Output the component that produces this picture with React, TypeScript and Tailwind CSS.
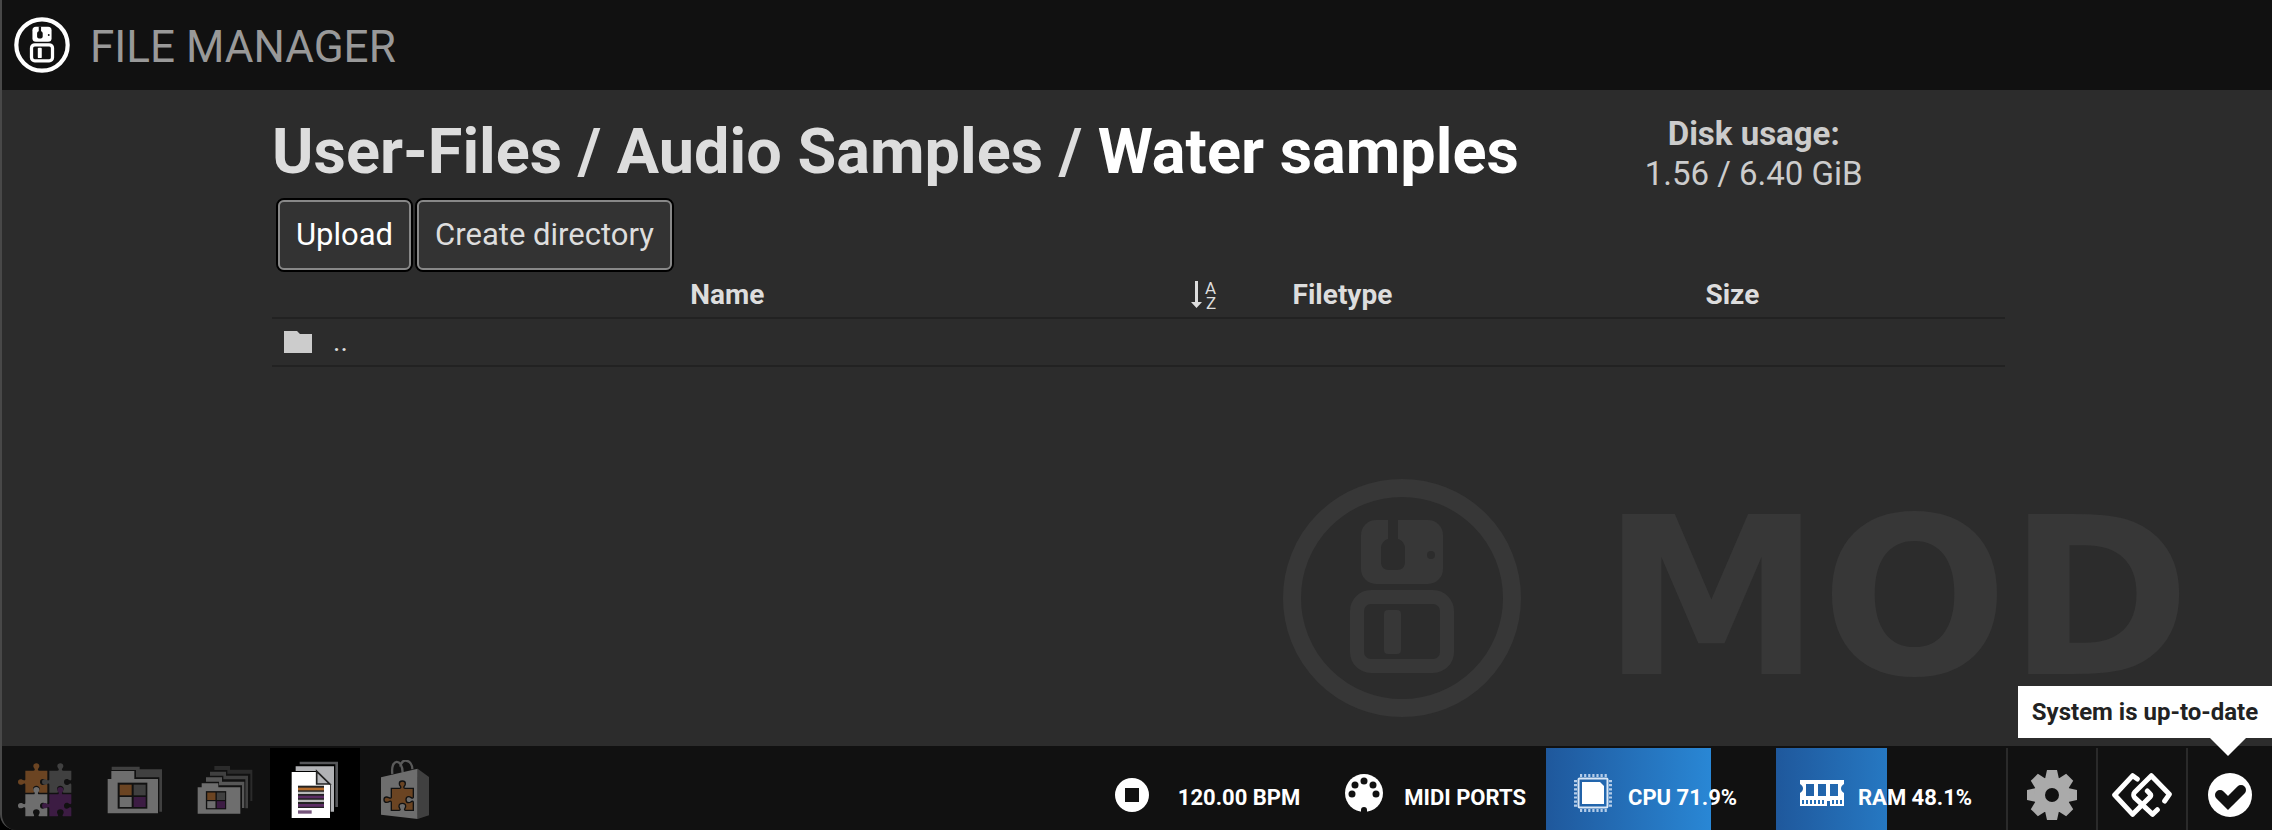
import React from 'react';

const ModFigure: React.FC<{ className?: string; cutout: string }> = ({ className, cutout }) => (
  <svg className={className} viewBox="0 0 240 240" fill="currentColor" aria-hidden="true">
    <circle cx="120" cy="120" r="110" fill="none" stroke="currentColor" strokeWidth="18" />
    <rect x="79" y="42" width="82" height="64" rx="15" />
    <path d="M106 41h10v20c4 1 7 5 7 9v14c0 5-3 8-8 8h-8c-5 0-8-3-8-8V70c0-4 3-8 7-9z" fill={cutout} />
    <circle cx="149" cy="77" r="4" fill={cutout} />
    <rect x="75" y="119" width="90" height="69" rx="14" fill="none" stroke="currentColor" strokeWidth="14" />
    <rect x="102" y="132" width="17" height="44" rx="4" />
  </svg>
);

const FolderIcon = () => (
  <svg className="w-[30px] h-6" viewBox="0 0 30 24" fill="#cccccc" aria-hidden="true">
    <path d="M1 1h13l3 3h12v19H1z" />
  </svg>
);

const SortIcon = () => (
  <svg className="w-8 h-9" viewBox="0 0 32 36" fill="#dddddd" aria-hidden="true">
    <path d="M4 4h3v21h4l-5.500 6L0 25h4z" />
    <text x="14" y="17" fontSize="17" fontWeight="400" fontFamily="Roboto, sans-serif">A</text>
    <text x="15" y="32" fontSize="17" fontWeight="400" fontFamily="Roboto, sans-serif">Z</text>
  </svg>
);

const PIECE =
  'M0 0h24c4 0 5-2 4-5-2-3-4-5-4-9 0-5 4-8 9-8s9 3 9 8c0 4-2 6-4 9-1 3 0 5 4 5h24v26c0 3-2 4-5 3-3-2-5-4-9-4-5 0-8 4-8 9s3 9 8 9c4 0 6-2 9-4 3-1 5 0 5 4v23H43c-3 0-4-2-3-4 2-3 3-5 3-8 0-5-4-9-10-9s-10 4-10 9c0 3 2 5 3 8 1 2 0 4-3 4H0V43c0-4-2-5-5-4-3 2-5 3-9 3-5 0-8-3-8-8s3-8 8-8c4 0 6 2 9 3 3 1 5 0 5-3z';

const PuzzleIcon = () => (
  <svg className="w-14 h-[58px]" viewBox="40 82 168 174" aria-hidden="true">
    <path transform="translate(65 111)" d={PIECE} fill="#6b4422" />
    <path transform="translate(137 111)" d={PIECE} fill="#404040" />
    <path transform="translate(65 182)" d={PIECE} fill="#6e6e6e" />
    <path transform="translate(137 182)" d={PIECE} fill="#3c1c43" />
  </svg>
);

const BoardGrid = () => (
  <>
    <rect x="360" y="152" width="89" height="78" fill="#111111" />
    <rect x="366" y="158" width="36" height="32" fill="#6b4422" />
    <rect x="408" y="158" width="36" height="32" fill="#404040" />
    <rect x="366" y="195" width="36" height="30" fill="#6e6e6e" />
    <rect x="408" y="195" width="36" height="30" fill="#3c1c43" />
  </>
);

const BoardsIcon = () => (
  <svg className="w-14 h-12" viewBox="328 102 168 144" aria-hidden="true">
    <path d="M342 104h84v8h67v127h-8V136h-70v-22h-73z" fill="#404040" />
    <path d="M330 141h11v-24h69v24h71v103H330z" fill="#6e6e6e" />
    <BoardGrid />
  </svg>
);

const BanksIcon = () => (
  <svg className="w-14 h-[50px]" viewBox="591 91 168 150" aria-hidden="true">
    <path d="M643 94h47v11h67v94h-6v-82h-69v-11h-39z" fill="#2b2b2b" />
    <path d="M630 111h48v12h66v98h-8v-87h-66v-11h-40z" fill="#404040" />
    <path d="M618 128h48v13h67v79h-7v-68h-69v-11h-39z" fill="#575757" />
    <path d="M593 158h12v-12h50v12h66v79H593z" fill="#6e6e6e" />
    <g transform="translate(371 63) scale(.685 .7)">
      <BoardGrid />
    </g>
  </svg>
);

const FilesIcon = () => (
  <svg className="w-12 h-[58px]" viewBox="879 78 144 174" aria-hidden="true">
    <path d="M905 80h115v136h-8V88H905z" fill="#56575a" />
    <path d="M893 94h115v136h-10V150l-42-42H893z" fill="#b1b2b5" />
    <path d="M881 111h75l40 39v99H881z" fill="#ffffff" />
    <path d="M956 109v38h39z" fill="#b5b6b9" stroke="#222222" strokeWidth="5" />
    <path d="M900 152h78v67h-78z" fill="#222222" />
    <path d="M900 158h78v8h-78z" fill="#b56c2c" />
    <path d="M900 170h78v7h-78zM900 194h78v7h-78z" fill="#b8b8b8" />
    <path d="M900 182h78v8h-78zM900 207h78v8h-78z" fill="#5c2d64" />
    <path d="M900 226h41v10h-41z" fill="#76567c" />
  </svg>
);

const StoreIcon = () => (
  <svg className="w-[50px] h-[60px]" viewBox="1137 78 150 180" aria-hidden="true">
    <path d="M1174 120c-6-48 30-48 31-4M1198 98c3-28 36-22 36 8" fill="none" stroke="#5a5a5a" strokeWidth="7" />
    <path d="M1140 130l110-26v151l-110-13z" fill="#6e6e6e" />
    <path d="M1250 104l34 25v115l-34 11z" fill="#404040" />
    <path transform="translate(1171 163)" d={PIECE} fill="#6b4422" stroke="#111111" strokeWidth="4" />
  </svg>
);

const StopIcon = () => (
  <svg className="w-9 h-9" viewBox="0 0 36 36" aria-hidden="true">
    <path fillRule="evenodd" d="M18 1a17 17 0 1 1 0 34 17 17 0 0 1 0-34zm-7 10v14h14V11z" fill="#ffffff" />
  </svg>
);

const MidiIcon = () => (
  <svg className="w-10 h-10" viewBox="0 0 40 40" fill="#111111" aria-hidden="true">
    <circle cx="20" cy="20" r="19" fill="#ffffff" />
    <circle cx="20" cy="8" r="3.500" />
    <circle cx="11" cy="12" r="3.500" />
    <circle cx="29" cy="12" r="3.500" />
    <circle cx="8" cy="21" r="3.500" />
    <circle cx="32" cy="21" r="3.500" />
    <path d="M17 40v-3a3 3 0 0 1 6 0v3z" />
  </svg>
);

const CpuIcon = () => (
  <svg className="w-10 h-10" viewBox="0 0 40 40" fill="none" aria-hidden="true">
    <path d="M7 2.500h27M7 37.500h27M2.500 7v27M37.500 7v27" stroke="#b5cde9" strokeWidth="3" strokeDasharray="2.200 1.900" />
    <rect x="5.500" y="5.500" width="29" height="29" rx="1" stroke="#dbe8f6" strokeWidth="2" />
    <path d="M9 9h18l4 4v18H9z" fill="#ffffff" />
  </svg>
);

const RamIcon = () => (
  <svg className="w-[46px] h-7" viewBox="0 0 46 28" aria-hidden="true">
    <path
      fillRule="evenodd"
      d="M1 1h44v4c-4 2-4 7 0 9v13H31v-5h-3v5H1V14c4-2 4-7 0-9zm6 4v12h8V5zm12 0v12h8V5zm12 0v12h8V5z"
      fill="#ffffff"
    />
    <path d="M3 23h24M33 23h11" stroke="#256fb7" strokeWidth="4" strokeDasharray="2 2" />
  </svg>
);

const GearIcon = () => (
  <svg className="w-[50px] h-[50px]" viewBox="-25 -25 50 50" fill="#aaaaaa" aria-hidden="true">
    {[0, 45, 90, 135].map(angle => (
      <path key={angle} transform={`rotate(${angle})`} d="M-5-25h10l2 9v32l-2 9h-10l-2-9v-32z" />
    ))}
    <circle r="18" />
    <circle r="7" fill="#111111" />
  </svg>
);

const LinkIcon = () => (
  <svg className="w-[60px] h-11" viewBox="0 0 180 132" fill="none" stroke="#ffffff" strokeWidth="15" strokeLinecap="round" strokeLinejoin="round" aria-hidden="true">
    <path d="M76 18L62 8 8 66l54 58 52-52c3-4 3-7 0-10l-8-8" />
    <path d="M136 110l-14 14L68 74c-4-4-4-12 0-16l50-50 54 56-14 20" />
  </svg>
);

const CheckIcon = () => (
  <svg className="w-[46px] h-[46px]" viewBox="0 0 46 46" fill="none" aria-hidden="true">
    <circle cx="23" cy="23" r="22" fill="#ffffff" />
    <path d="M13 23l8 8 13-13" stroke="#111111" strokeWidth="10" strokeLinecap="round" />
  </svg>
);

const tabs = [
  { label: 'Pedalboard', icon: <PuzzleIcon /> },
  { label: 'Pedalboards library', icon: <BoardsIcon /> },
  { label: 'Banks', icon: <BanksIcon /> },
  { label: 'File manager', icon: <FilesIcon />, active: true },
  { label: 'Plugin store', icon: <StoreIcon /> },
];

const meters = [
  { label: 'CPU', value: 71.9, icon: <CpuIcon />, spacing: 'pl-[27px] gap-[15px]', fill: 'to-[#2987d5]' },
  { label: 'RAM', value: 48.1, icon: <RamIcon />, spacing: 'pl-[23px] gap-[13px]', fill: 'to-[#2678c2]' },
];

const Header = () => (
  <header className="flex h-[90px] items-center gap-5 bg-[#111111] pl-3">
    <ModFigure className="h-14 w-14 text-white" cutout="#111111" />
    <h1 className="pt-1 text-[44px] leading-none text-[#999999]">FILE MANAGER</h1>
  </header>
);

const FileTable = () => (
  <table className="w-full table-fixed border-collapse text-[28px] leading-9">
    <thead>
      <tr className="h-[46px] border-b-2 border-[#222222]">
        <th className="w-[53%] pr-2">Name</th>
        <th className="w-[2%]">
          <button className="block" aria-label="Sort by name">
            <SortIcon />
          </button>
        </th>
        <th className="w-[14%] pr-2">Filetype</th>
        <th className="w-[31%] pr-2">Size</th>
      </tr>
    </thead>
    <tbody>
      <tr className="h-12 border-b-2 border-[#222222]">
        <td>
          <a href="#" className="flex items-center gap-5 pl-[11px]">
            <FolderIcon />
            ..
          </a>
        </td>
        <td />
        <td />
        <td />
      </tr>
    </tbody>
  </table>
);

const Footer = () => (
  <footer className="relative flex h-[84px] bg-[#111111] pt-0.5 text-[22px] font-bold text-white">
    <nav className="-ml-0.5 flex">
      {tabs.map(tab => (
        <button
          key={tab.label}
          aria-label={tab.label}
          className={`flex w-[90px] items-center justify-center pt-0.5 ${tab.active ? 'bg-black' : ''}`}
        >
          {tab.icon}
        </button>
      ))}
    </nav>

    <div className="ml-auto flex">
      <button className="flex items-center gap-7 pt-3">
        <StopIcon />
        <span className="pt-1">120.00 BPM</span>
      </button>
      <button className="mr-5 ml-11 flex items-center gap-5 pt-2">
        <MidiIcon />
        <span className="pt-2">MIDI PORTS</span>
      </button>
      {meters.map(meter => (
        <div key={meter.label} className="relative w-[230px]">
          <div
            className={`h-full bg-linear-to-r from-[#1f589c] ${meter.fill}`}
            style={{ width: `${meter.value}%` }}
          />
          <div className={`absolute inset-0 flex items-center pt-2 ${meter.spacing}`}>
            {meter.icon}
            <span className="pt-2">{meter.label} {meter.value}%</span>
          </div>
        </div>
      ))}
      <button aria-label="Settings" className="flex w-[90px] items-center justify-center border-l-2 border-[#2a2a2a] pt-3">
        <GearIcon />
      </button>
      <button aria-label="Connections" className="flex w-[90px] items-center justify-center border-l-2 border-[#2a2a2a] pt-3">
        <LinkIcon />
      </button>
      <button aria-label="System status" className="flex w-[86px] items-center justify-center border-l-2 border-[#2a2a2a] pt-3">
        <CheckIcon />
      </button>
    </div>

    <div role="tooltip" className="absolute right-0 bottom-[92px] flex h-[52px] w-[254px] items-center justify-center bg-white text-[24px] text-[#222222]">
      System is up-to-date
      <span className="absolute top-full right-[26px] border-x-[18px] border-t-[18px] border-x-transparent border-t-white" />
    </div>
  </footer>
);

const App: React.FC = () => {
  return (
    <div className="bg-black font-[Roboto,sans-serif]">
      <div className="flex min-h-screen flex-col overflow-hidden rounded-bl-2xl border-l-2 border-[#484848] bg-[#2c2c2c] text-[#dddddd]">
        <Header />
        <main className="relative flex-1">
          <div className="absolute right-[18px] bottom-[28px] flex w-[972px] items-center gap-20 text-[#373737]" aria-hidden="true">
            <ModFigure className="h-60 w-60 shrink-0" cutout="#2c2c2c" />
            <span className="font-['DejaVu_Sans',sans-serif] text-[220px] leading-[240px] font-bold">MOD</span>
          </div>
          <div className="relative mr-[267px] ml-[270px]">
            <div className="flex">
              <div className="w-[73%]">
                <h2 className="pt-6 text-[63px] leading-[76px] font-bold whitespace-nowrap">
                  <a href="#">User-Files</a> / <a href="#">Audio Samples</a> / <span className="text-white">Water samples</span>
                </h2>
                <div className="mt-2 flex gap-0.5 pl-1">
                  <button className="h-[74px] rounded-lg border-2 border-black bg-[#333333] text-[31px] text-white">
                    <span className="flex h-full items-center rounded-md border-2 border-[#888888] px-4">Upload</span>
                  </button>
                  <button className="h-[74px] rounded-lg border-2 border-black bg-[#333333] text-[31px]">
                    <span className="flex h-full items-center rounded-md border-2 border-[#888888] px-4">Create directory</span>
                  </button>
                </div>
              </div>
              <div className="w-[25%] pt-6 text-center text-[33px] leading-10 text-[#cccccc]">
                <div className="font-bold">Disk usage:</div>
                <div>1.56 / 6.40 GiB</div>
              </div>
            </div>
            <FileTable />
          </div>
        </main>
        <Footer />
      </div>
    </div>
  );
};

export default App;
